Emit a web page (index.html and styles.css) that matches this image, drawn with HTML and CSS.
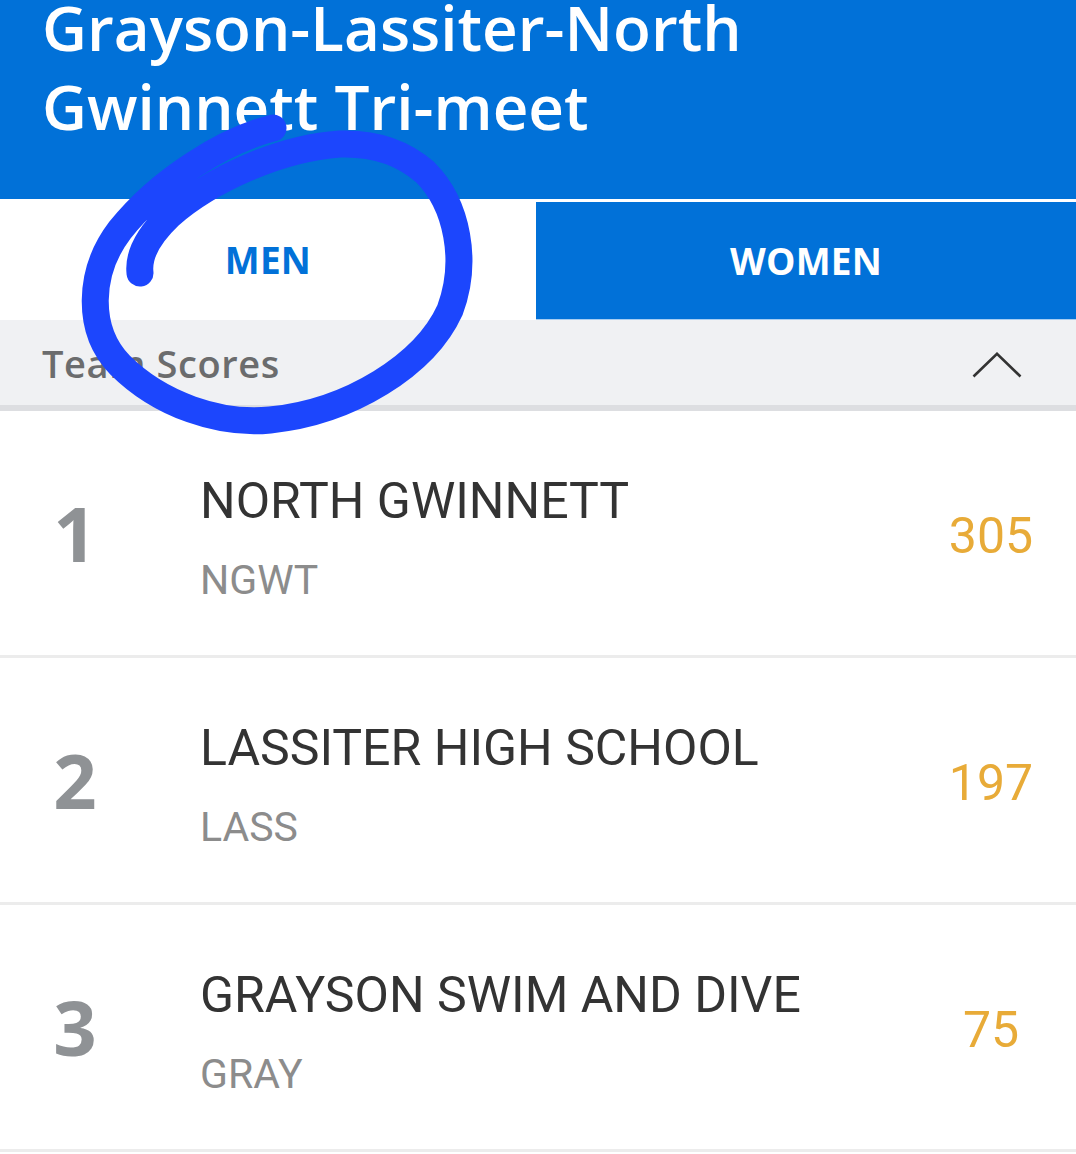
FILE: index.html
```html
<!DOCTYPE html>
<html lang="en">
<head>
<meta charset="utf-8">
<title>Grayson-Lassiter-North Gwinnett Tri-meet</title>
<link rel="stylesheet" href="styles.css">
</head>
<body>
<div class="page">
  <header class="meet-header">
    <h1 class="meet-title">Grayson-Lassiter-North Gwinnett Tri-meet</h1>
  </header>

  <nav class="tabs">
    <div class="tab tab-active">MEN</div>
    <div class="tab tab-inactive">WOMEN</div>
  </nav>

  <section class="scores">
    <div class="section-head">
      <span class="section-title">Team Scores</span>
      <svg class="chevron" width="50" height="26" viewBox="0 0 50 26">
        <polyline points="1.5,24.5 25,1.8 48.5,24.5" fill="none" stroke="#333" stroke-width="2.6" stroke-linejoin="miter"/>
      </svg>
    </div>

    <div class="team-row">
      <div class="rank">1</div>
      <div class="team-info">
        <div class="team-name">NORTH GWINNETT</div>
        <div class="team-code">NGWT</div>
      </div>
      <div class="points">305</div>
    </div>

    <div class="team-row">
      <div class="rank">2</div>
      <div class="team-info">
        <div class="team-name">LASSITER HIGH SCHOOL</div>
        <div class="team-code">LASS</div>
      </div>
      <div class="points">197</div>
    </div>

    <div class="team-row">
      <div class="rank">3</div>
      <div class="team-info">
        <div class="team-name">GRAYSON SWIM AND DIVE</div>
        <div class="team-code">GRAY</div>
      </div>
      <div class="points">75</div>
    </div>
  </section>

  <!-- hand-drawn marker circle around the MEN tab -->
  <svg class="marker" width="1076" height="1154" viewBox="0 0 1076 1154">
    <path d="M 273 128
             C 225 140, 160 180, 120 230
             C 88 272, 86 330, 120 365
             C 160 405, 220 425, 270 420
             C 350 412, 425 365, 450 310
             C 468 262, 458 205, 425 172
             C 400 150, 370 143, 340 144
             C 280 148, 210 180, 170 215
             C 148 236, 138 255, 140 273"
          fill="none" stroke="#1c46fd" stroke-width="27" stroke-linecap="round" stroke-linejoin="round"/>
  </svg>
</div>
</body>
</html>
```

FILE: styles.css
```css
html, body {
  margin: 0;
  padding: 0;
  background: #ffffff;
}

.page {
  position: relative;
  width: 1076px;
  height: 1154px;
  overflow: hidden;
  font-family: "Open Sans", "Liberation Sans", sans-serif;
}

/* blue meet header */
.meet-header {
  height: 199px;
  background: #0171d8;
  padding: 0 42px;
  box-sizing: border-box;
  overflow: hidden;
}

.meet-title {
  margin: -12px 0 0;
  color: #ffffff;
  font-size: 62px;
  font-weight: 600;
  line-height: 79px;
  letter-spacing: 0;
  width: 760px;
}

/* gender tabs */
.tabs {
  display: grid;
  grid-template-columns: 536px 1fr;
  height: 121px;
  background: #ffffff;
}

.tab {
  display: flex;
  align-items: center;
  justify-content: center;
  font-size: 37px;
  font-weight: 700;
  letter-spacing: 0.2px;
}

.tab-active {
  color: #0171d8;
  background: #ffffff;
}

.tab-inactive {
  color: #ffffff;
  background: #0171d8;
  border-top: 3px solid #ffffff;
  border-bottom: 1px solid #a7cdf1;
}

/* team scores panel */
.section-head {
  display: flex;
  align-items: center;
  justify-content: space-between;
  height: 85px;
  padding: 0 54px 0 42px;
  background: #f0f1f3;
  border-bottom: 6px solid #dddee1;
}

.section-title {
  color: #6b6c6d;
  font-size: 38px;
  font-weight: 600;
  letter-spacing: 0.6px;
}

.chevron {
  display: block;
  margin-top: 4px;
}

.team-row {
  display: grid;
  grid-template-columns: 150px 1fr 130px;
  column-gap: 50px;
  align-items: center;
  height: 244px;
  padding-right: 20px;
  border-bottom: 3px solid #ececec;
}

.rank {
  text-align: center;
  color: #8f9295;
  font-size: 76px;
  font-weight: 700;
  line-height: 1;
}

.team-info {
  padding-top: 10px;
  font-family: Roboto, "Liberation Sans", sans-serif;
}

.team-name {
  color: #333333;
  font-size: 50px;
  line-height: 60px;
  white-space: nowrap;
}

.team-code {
  margin-top: 23px;
  color: #8c8c8c;
  font-size: 41px;
  line-height: 52px;
}

.points {
  text-align: center;
  color: #e8ab38;
  font-family: Roboto, "Liberation Sans", sans-serif;
  font-size: 50px;
  line-height: 1;
  padding-top: 6px;
}

/* freehand marker layer */
.marker {
  position: absolute;
  top: 0;
  left: 0;
  pointer-events: none;
}
```
